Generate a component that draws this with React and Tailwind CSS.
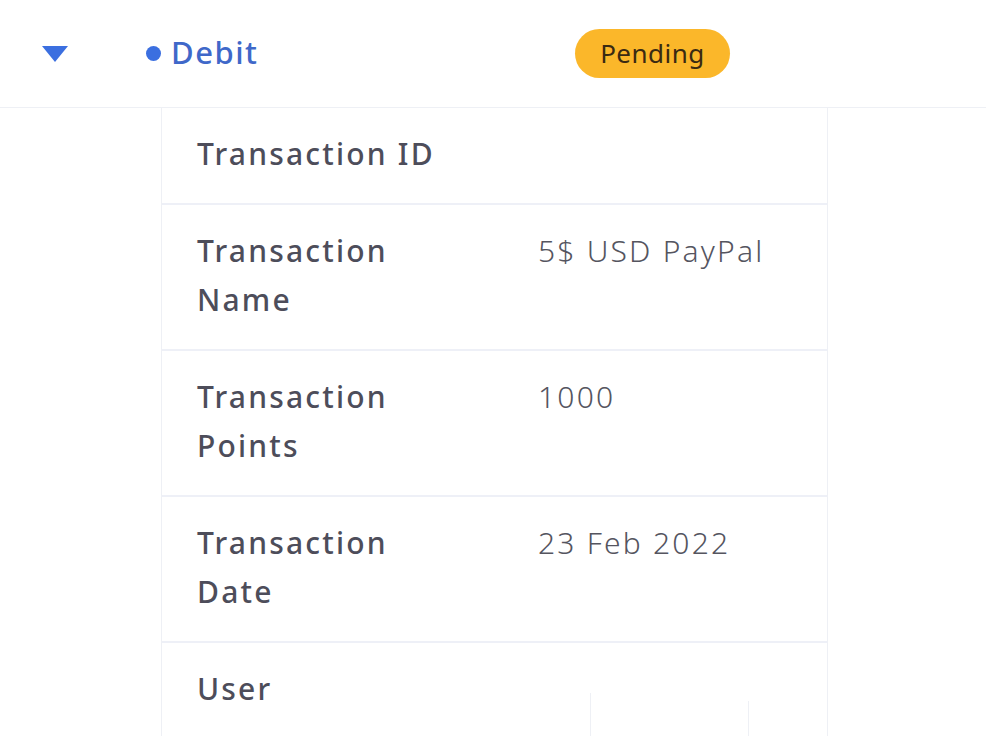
import React from "react";

const rows = [
  { label: ["Transaction ID"], value: "" },
  { label: ["Transaction", "Name"], value: "5$ USD PayPal" },
  { label: ["Transaction", "Points"], value: "1000" },
  { label: ["Transaction", "Date"], value: "23 Feb 2022" },
];

export default function App() {
  return (
    <div
      className="w-[986px] h-[736px] overflow-hidden bg-white"
      style={{ fontFamily: "'Noto Sans', 'Open Sans', sans-serif" }}
    >
      <div className="h-[108px] border-b border-[#eef0f5] flex items-center">
        <div className="w-[146px] pl-[42px] flex items-center">
          <svg width="26" height="16" viewBox="0 0 26 16">
            <path d="M0 0 L26 0 L13 16 Z" fill="#3b6fe0" />
          </svg>
        </div>
        <div className="flex items-center w-[429px]">
          <span className="w-[15px] h-[15px] rounded-full bg-[#3b6fe0] mr-[10px]" />
          <span className="text-[31px] font-medium text-[#3f68c9] tracking-[1.5px] -mt-[2px]">Debit</span>
        </div>
        <div className="w-[155px] h-[49px] rounded-full bg-[#fbb72a] flex items-center justify-center text-[26px] text-[#3a2a12] tracking-[0.5px]">
          Pending
        </div>
      </div>
      <div className="ml-[161px] w-[667px] border-x border-[#eef0f5]">
        {rows.map((r, i) => (
          <div
            key={i}
            className="flex border-b-2 border-[#eef0f7] pl-[35px] pt-[21px] pb-[25px] leading-[49px]"
          >
            <div className="w-[341px] text-[30px] font-medium text-[#4d4d5a] tracking-[2.2px]">
              {r.label.map((l, j) => (
                <div key={j}>{l}</div>
              ))}
            </div>
            <div className="text-[30px] font-light text-[#55555f] tracking-[2.2px]">{r.value}</div>
          </div>
        ))}
        <div className="relative pl-[35px] pt-[21px] leading-[49px] h-[120px]">
          <div className="text-[30px] font-medium text-[#4d4d5a] tracking-[2.2px]">User</div>
          <div className="absolute left-[428px] top-[50px] h-[60px] border-l border-[#eef0f5]" />
          <div className="absolute left-[586px] top-[58px] h-[60px] border-l border-[#eef0f5]" />
        </div>
      </div>
    </div>
  );
}
